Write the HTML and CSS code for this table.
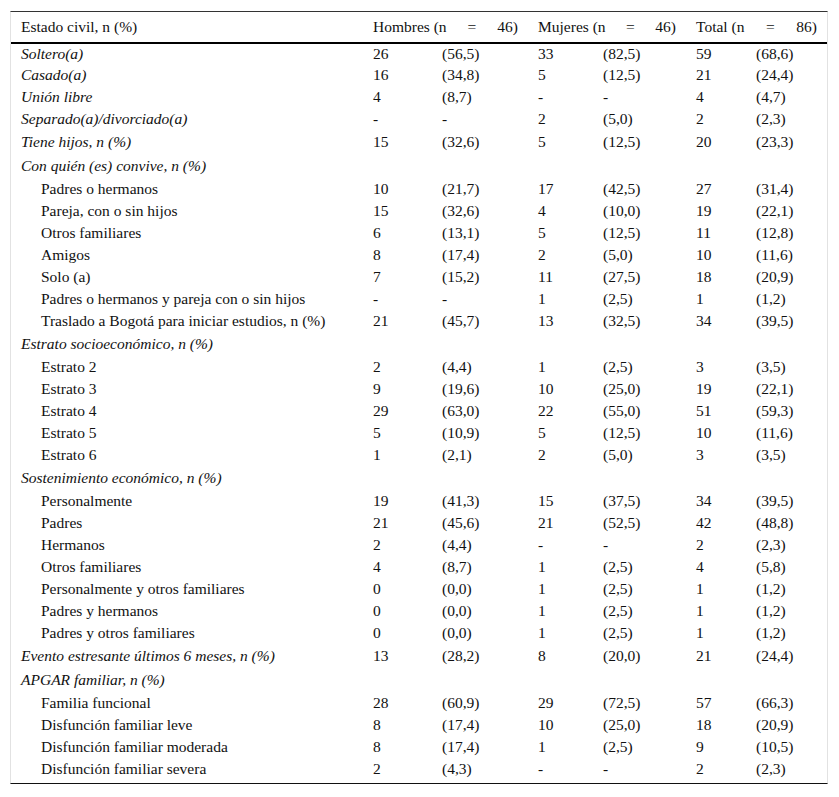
FILE: index.html
```html
<!DOCTYPE html>
<html lang="es">
<head>
<meta charset="utf-8">
<title>Tabla</title>
<link rel="stylesheet" href="styles.css">
</head>
<body>
<div class="wrap">
<table class="data">
<colgroup>
<col class="c-label"><col class="c-hn"><col class="c-hp"><col class="c-mn"><col class="c-mp"><col class="c-tn"><col class="c-tp">
</colgroup>
<thead>
<tr>
<th class="lbl">Estado civil, n (%)</th>
<th colspan="2"><div class="just"><span>Hombres (n</span><span>=</span><span>46)</span></div></th>
<th colspan="2"><div class="just"><span>Mujeres (n</span><span>=</span><span>46)</span></div></th>
<th colspan="2"><div class="just"><span>Total (n</span><span>=</span><span>86)</span></div></th>
</tr>
</thead>
<tbody>
<tr><td class="cat">Soltero(a)</td><td>26</td><td>(56,5)</td><td>33</td><td>(82,5)</td><td>59</td><td>(68,6)</td></tr>
<tr><td class="cat">Casado(a)</td><td>16</td><td>(34,8)</td><td>5</td><td>(12,5)</td><td>21</td><td>(24,4)</td></tr>
<tr><td class="cat">Unión libre</td><td>4</td><td>(8,7)</td><td>-</td><td>-</td><td>4</td><td>(4,7)</td></tr>
<tr><td class="cat">Separado(a)/divorciado(a)</td><td>-</td><td>-</td><td>2</td><td>(5,0)</td><td>2</td><td>(2,3)</td></tr>
<tr class="tall"><td class="cat">Tiene hijos, n (%)</td><td>15</td><td>(32,6)</td><td>5</td><td>(12,5)</td><td>20</td><td>(23,3)</td></tr>
<tr class="tall"><td class="cat">Con quién (es) convive, n (%)</td><td></td><td></td><td></td><td></td><td></td><td></td></tr>
<tr><td class="sub">Padres o hermanos</td><td>10</td><td>(21,7)</td><td>17</td><td>(42,5)</td><td>27</td><td>(31,4)</td></tr>
<tr><td class="sub">Pareja, con o sin hijos</td><td>15</td><td>(32,6)</td><td>4</td><td>(10,0)</td><td>19</td><td>(22,1)</td></tr>
<tr><td class="sub">Otros familiares</td><td>6</td><td>(13,1)</td><td>5</td><td>(12,5)</td><td>11</td><td>(12,8)</td></tr>
<tr><td class="sub">Amigos</td><td>8</td><td>(17,4)</td><td>2</td><td>(5,0)</td><td>10</td><td>(11,6)</td></tr>
<tr><td class="sub">Solo (a)</td><td>7</td><td>(15,2)</td><td>11</td><td>(27,5)</td><td>18</td><td>(20,9)</td></tr>
<tr><td class="sub">Padres o hermanos y pareja con o sin hijos</td><td>-</td><td>-</td><td>1</td><td>(2,5)</td><td>1</td><td>(1,2)</td></tr>
<tr><td class="sub">Traslado a Bogotá para iniciar estudios, n (%)</td><td>21</td><td>(45,7)</td><td>13</td><td>(32,5)</td><td>34</td><td>(39,5)</td></tr>
<tr class="tall"><td class="cat">Estrato socioeconómico, n (%)</td><td></td><td></td><td></td><td></td><td></td><td></td></tr>
<tr><td class="sub">Estrato 2</td><td>2</td><td>(4,4)</td><td>1</td><td>(2,5)</td><td>3</td><td>(3,5)</td></tr>
<tr><td class="sub">Estrato 3</td><td>9</td><td>(19,6)</td><td>10</td><td>(25,0)</td><td>19</td><td>(22,1)</td></tr>
<tr><td class="sub">Estrato 4</td><td>29</td><td>(63,0)</td><td>22</td><td>(55,0)</td><td>51</td><td>(59,3)</td></tr>
<tr><td class="sub">Estrato 5</td><td>5</td><td>(10,9)</td><td>5</td><td>(12,5)</td><td>10</td><td>(11,6)</td></tr>
<tr><td class="sub">Estrato 6</td><td>1</td><td>(2,1)</td><td>2</td><td>(5,0)</td><td>3</td><td>(3,5)</td></tr>
<tr class="tall"><td class="cat">Sostenimiento económico, n (%)</td><td></td><td></td><td></td><td></td><td></td><td></td></tr>
<tr><td class="sub">Personalmente</td><td>19</td><td>(41,3)</td><td>15</td><td>(37,5)</td><td>34</td><td>(39,5)</td></tr>
<tr><td class="sub">Padres</td><td>21</td><td>(45,6)</td><td>21</td><td>(52,5)</td><td>42</td><td>(48,8)</td></tr>
<tr><td class="sub">Hermanos</td><td>2</td><td>(4,4)</td><td>-</td><td>-</td><td>2</td><td>(2,3)</td></tr>
<tr><td class="sub">Otros familiares</td><td>4</td><td>(8,7)</td><td>1</td><td>(2,5)</td><td>4</td><td>(5,8)</td></tr>
<tr><td class="sub">Personalmente y otros familiares</td><td>0</td><td>(0,0)</td><td>1</td><td>(2,5)</td><td>1</td><td>(1,2)</td></tr>
<tr><td class="sub">Padres y hermanos</td><td>0</td><td>(0,0)</td><td>1</td><td>(2,5)</td><td>1</td><td>(1,2)</td></tr>
<tr><td class="sub">Padres y otros familiares</td><td>0</td><td>(0,0)</td><td>1</td><td>(2,5)</td><td>1</td><td>(1,2)</td></tr>
<tr class="tall"><td class="cat">Evento estresante últimos 6 meses, n (%)</td><td>13</td><td>(28,2)</td><td>8</td><td>(20,0)</td><td>21</td><td>(24,4)</td></tr>
<tr class="tall"><td class="cat">APGAR familiar, n (%)</td><td></td><td></td><td></td><td></td><td></td><td></td></tr>
<tr><td class="sub">Familia funcional</td><td>28</td><td>(60,9)</td><td>29</td><td>(72,5)</td><td>57</td><td>(66,3)</td></tr>
<tr><td class="sub">Disfunción familiar leve</td><td>8</td><td>(17,4)</td><td>10</td><td>(25,0)</td><td>18</td><td>(20,9)</td></tr>
<tr><td class="sub">Disfunción familiar moderada</td><td>8</td><td>(17,4)</td><td>1</td><td>(2,5)</td><td>9</td><td>(10,5)</td></tr>
<tr><td class="sub">Disfunción familiar severa</td><td>2</td><td>(4,3)</td><td>-</td><td>-</td><td>2</td><td>(2,3)</td></tr>
</tbody>
</table>
</div>
</body>
</html>
```

FILE: styles.css
```css
html, body {
  margin: 0;
  padding: 0;
  background: #fff;
}
body {
  padding: 11px 11px 0 10px;
  font-family: "Liberation Serif", Tinos, "DejaVu Serif", serif;
  font-size: 15.5px;
  color: #111;
}
.wrap {
  width: 818px;
  border-left: 1px solid #e2e2e2;
  border-right: 1px solid #e2e2e2;
  border-top: 1px solid #333;
  border-bottom: 1px solid #111;
  box-sizing: border-box;
  padding-bottom: 2px;
}
.data {
  width: 100%;
  table-layout: fixed;
  border-collapse: collapse;
  font-family: "Liberation Serif", Tinos, "DejaVu Serif", serif;
  font-size: 15.5px;
}
.c-label { width: 352px; }
.c-hn { width: 69px; }
.c-hp { width: 96px; }
.c-mn { width: 65px; }
.c-mp { width: 93px; }
.c-tn { width: 60px; }
.c-tp { width: 81px; }
th {
  font-weight: normal;
  text-align: left;
  height: 30px;
  padding: 0 10px;
  border-bottom: 2px solid #000;
  vertical-align: middle;
  line-height: 18px;
}
th.lbl { padding-left: 10px; }
.just {
  display: flex;
  justify-content: space-between;
}
td {
  box-sizing: border-box;
  height: 22px;
  padding: 0 10px 2px;
  vertical-align: middle;
  white-space: nowrap;
  line-height: 16px;
}
tr.tall td { height: 24px; }
td.cat {
  font-style: italic;
  padding-left: 10px;
}
td.sub {
  padding-left: 30px;
}
```
